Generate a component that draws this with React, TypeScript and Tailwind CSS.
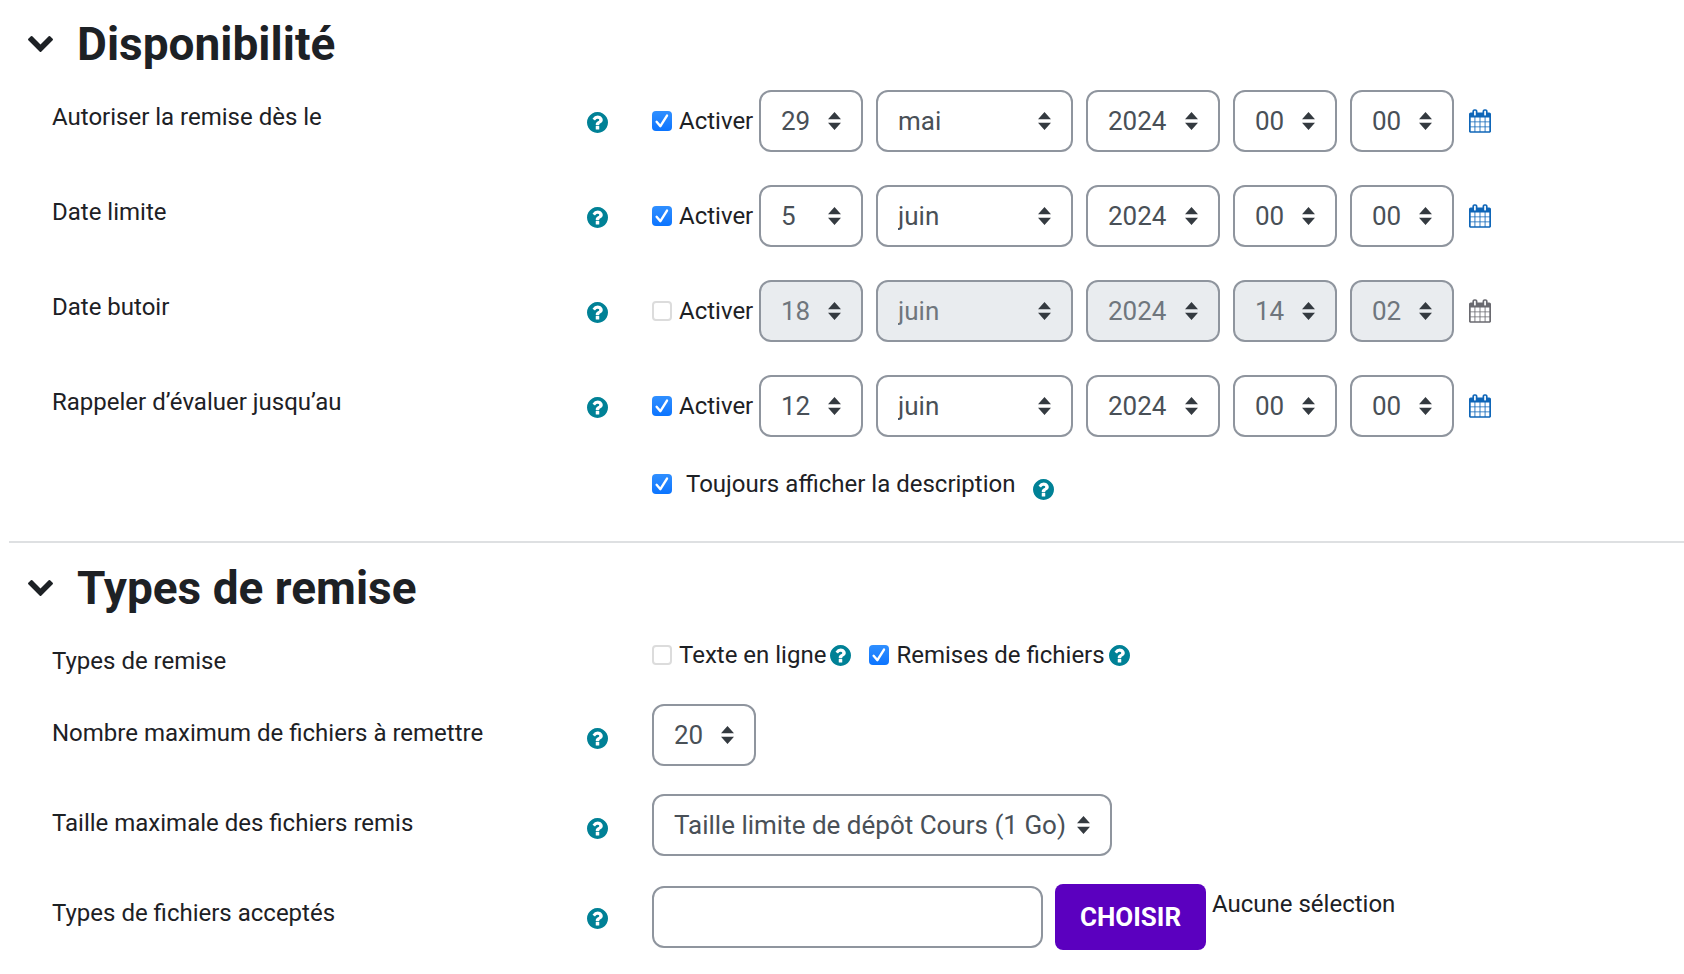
import React, { useState } from "react";
import clsx from "clsx";

const MONTHS = ["janvier", "février", "mars", "avril", "mai", "juin", "juillet", "août", "septembre", "octobre", "novembre", "décembre"];

const range = (from: number, to: number) => Array.from({ length: to - from + 1 }, (_, i) => String(from + i));
const padded = (to: number) => range(0, to).map((n) => n.padStart(2, "0"));

const DAYS = range(1, 31);
const YEARS = range(2020, 2030);
const HOURS = padded(23);
const MINUTES = padded(59);

function HelpIcon({ about }: { about: string }) {
    return (
        <button type="button" aria-label={`Aide sur ${about}`} className="block shrink-0 text-[#008196]">
            <svg viewBox="128 128 1536 1536" className="block h-[21px] w-[21px] fill-current">
                <path d="M1024 1376v-192q0-14-9-23t-23-9h-192q-14 0-23 9t-9 23v192q0 14 9 23t23 9h192q14 0 23-9t9-23zM1280 704q0-88-55.5-163t-138.5-116-170-41q-243 0-371 213-15 24 8 42l132 100q7 6 19 6 16 0 25-12 53-68 86-92 34-24 86-24 48 0 85.5 26t37.5 59q0 38-20 61t-68 45q-63 28-115.5 86.5t-52.5 125.5v36q0 14 9 23t23 9h192q14 0 23-9t9-23q0-19 21.5-49.5t54.5-49.5q32-18 49-28.5t46-35 44.5-48 28-60.5 12.5-81zM1664 896q0 209-103 385.5t-279.5 279.5-385.5 103-385.5-103-279.5-279.5-103-385.5 103-385.5 279.5-279.5 385.5-103 385.5 103 279.5 279.5 103 385.5z" />
            </svg>
        </button>
    );
}

function CalendarIcon() {
    return (
        <svg viewBox="64 0 1664 1792" className="block h-6 w-[22px] fill-current">
            <path d="M192 1664h288v-288h-288v288zM544 1664h320v-288h-320v288zM192 1312h288v-320h-288v320zM544 1312h320v-320h-320v320zM192 928h288v-288h-288v288zM928 1664h320v-288h-320v288zM544 928h320v-288h-320v288zM1312 1664h288v-288h-288v288zM928 1312h320v-320h-320v320zM576 448v-288q0-13-9.5-22.5t-22.5-9.5h-64q-13 0-22.5 9.5t-9.5 22.5v288q0 13 9.5 22.5t22.5 9.5h64q13 0 22.5-9.5t9.5-22.5zM1312 1312h288v-320h-288v320zM928 928h320v-288h-320v288zM1312 928h288v-288h-288v288zM1344 448v-288q0-13-9.5-22.5t-22.5-9.5h-64q-13 0-22.5 9.5t-9.5 22.5v288q0 13 9.5 22.5t22.5 9.5h64q13 0 22.5-9.5t9.5-22.5zM1728 384v1280q0 52-38 90t-90 38h-1408q-52 0-90-38t-38-90v-1280q0-52 38-90t90-38h128v-96q0-66 47-113t113-47h64q66 0 113 47t47 113v96h384v-96q0-66 47-113t113-47h64q66 0 113 47t47 113v96h128q52 0 90 38t38 90z" />
        </svg>
    );
}

interface CheckboxProps {
    id: string;
    label: string;
    checked: boolean;
    onChange: (checked: boolean) => void;
    wide?: boolean;
}

function Checkbox({ id, label, checked, onChange, wide = false }: CheckboxProps) {
    return (
        <div className={clsx("flex items-center", wide ? "gap-[14px]" : "gap-[7px]")}>
            <span className="relative block h-5 w-5">
                <input
                    id={id}
                    type="checkbox"
                    checked={checked}
                    onChange={(e) => onChange(e.target.checked)}
                    className="peer block h-5 w-5 appearance-none rounded-[4px] border-2 border-[#dcdcdc] bg-white checked:border-0 checked:bg-linear-to-b checked:from-[#2f8fff] checked:to-[#0a74ff]"
                />
                <svg viewBox="0 0 20 20" className="pointer-events-none absolute inset-0 hidden h-5 w-5 peer-checked:block">
                    <path d="M4.6 10.8l3.8 4.4L15 4.6" fill="none" stroke="#fff" strokeWidth="2.4" strokeLinecap="round" strokeLinejoin="round" />
                </svg>
            </span>
            <label htmlFor={id}>{label}</label>
        </div>
    );
}

interface SelectProps {
    id?: string;
    label?: string;
    value: string;
    options: string[];
    width: string;
    disabled?: boolean;
}

function Select({ id, label, value, options, width, disabled = false }: SelectProps) {
    return (
        <div className={clsx("relative", width)}>
            <select
                id={id}
                aria-label={label}
                defaultValue={value}
                disabled={disabled}
                className="block h-[62px] w-full appearance-none rounded-xl border-2 border-[#8f959e] bg-white pl-5 text-[26px] text-[#495057] disabled:bg-[#e9ecef] disabled:text-[#6f767d] disabled:opacity-100"
            >
                {options.map((o) => (
                    <option key={o}>{o}</option>
                ))}
            </select>
            <svg viewBox="0 0 4 5" preserveAspectRatio="none" className="pointer-events-none absolute top-[22px] right-[22px] h-[18px] w-[13px] fill-[#343a40]">
                <path d="M2 0L0 2h4zm0 5L0 3h4z" />
            </svg>
        </div>
    );
}

interface RowProps {
    label: string;
    htmlFor?: string;
    help?: boolean;
    lowered?: boolean;
    className?: string;
    children: React.ReactNode;
}

function Row({ label, htmlFor, help = true, lowered = false, className, children }: RowProps) {
    return (
        <div className={clsx("grid grid-cols-[556px_1fr] gap-x-11", className)}>
            <div className={clsx("flex items-start justify-between", lowered && "pt-[2px]")}>
                {label && (
                    <label htmlFor={htmlFor} className="pt-[9px]">
                        {label}
                    </label>
                )}
                {help && (
                    <div className="pt-[22px]">
                        <HelpIcon about={label} />
                    </div>
                )}
            </div>
            <div className="flex flex-wrap items-start">{children}</div>
        </div>
    );
}

interface DateField {
    id: string;
    label: string;
    enabled: boolean;
    day: string;
    month: string;
    year: string;
    hour: string;
    minute: string;
}

const DATE_FIELDS: DateField[] = [
    { id: "from", label: "Autoriser la remise dès le", enabled: true, day: "29", month: "mai", year: "2024", hour: "00", minute: "00" },
    { id: "due", label: "Date limite", enabled: true, day: "5", month: "juin", year: "2024", hour: "00", minute: "00" },
    { id: "cutoff", label: "Date butoir", enabled: false, day: "18", month: "juin", year: "2024", hour: "14", minute: "02" },
    { id: "grading", label: "Rappeler d’évaluer jusqu’au", enabled: true, day: "12", month: "juin", year: "2024", hour: "00", minute: "00" },
];

function DateRow({ field }: { field: DateField }) {
    const [enabled, setEnabled] = useState(field.enabled);

    return (
        <Row label={field.label} htmlFor={`${field.id}-day`}>
            <div className="flex items-center">
                <div className="w-[107px]">
                    <Checkbox id={`${field.id}-enabled`} label="Activer" checked={enabled} onChange={setEnabled} />
                </div>
                <div className="flex gap-[13px]">
                    <Select id={`${field.id}-day`} value={field.day} options={DAYS} width="w-[104px]" disabled={!enabled} />
                    <Select label="Mois" value={field.month} options={MONTHS} width="w-[197px]" disabled={!enabled} />
                    <Select label="Année" value={field.year} options={YEARS} width="w-[134px]" disabled={!enabled} />
                    <Select label="Heure" value={field.hour} options={HOURS} width="w-[104px]" disabled={!enabled} />
                    <Select label="Minute" value={field.minute} options={MINUTES} width="w-[104px]" disabled={!enabled} />
                </div>
                <a href="#calendrier" aria-label="Calendrier" className={clsx("ml-[15px]", enabled ? "text-[#0f66b8]" : "text-[#6a6a70]")}>
                    <CalendarIcon />
                </a>
            </div>
        </Row>
    );
}

interface SectionProps {
    title: string;
    children: React.ReactNode;
}

function Section({ title, children }: SectionProps) {
    const [open, setOpen] = useState(true);

    return (
        <section>
            <div className="flex items-center gap-6 pl-7">
                <button type="button" aria-label={title} aria-expanded={open} onClick={() => setOpen(!open)} className="text-[#1d2125]">
                    <svg viewBox="90 533 1612 1035" className={clsx("block h-4 w-[25px] fill-current", !open && "-rotate-90")}>
                        <path d="M1683 808l-742 741q-19 19-45 19t-45-19l-742-741q-19-19-19-45.5t19-45.5l166-165q19-19 45-19t45 19l531 531 531-531q19-19 45-19t45 19l166 165q19 19 19 45.5t-19 45.5z" />
                    </svg>
                </button>
                <h3 className="text-[46px] leading-[54px] font-bold">{title}</h3>
            </div>
            {open && <div className="pl-[52px]">{children}</div>}
        </section>
    );
}

export default function App() {
    const [showDescription, setShowDescription] = useState(true);
    const [onlineText, setOnlineText] = useState(false);
    const [fileSubmission, setFileSubmission] = useState(true);

    return (
        <form className="bg-white pt-[17px] pb-6 font-[Roboto,'Noto_Sans',sans-serif] text-2xl leading-9 text-[#1d2125]">
            <Section title="Disponibilité">
                <div className="mt-[19px] flex flex-col gap-[33px]">
                    {DATE_FIELDS.map((field) => (
                        <DateRow key={field.id} field={field} />
                    ))}
                </div>
                <Row label="" help={false} className="mt-[29px]">
                    <Checkbox id="show-description" label="Toujours afficher la description" checked={showDescription} onChange={setShowDescription} wide />
                    <div className="pt-[13px] pl-[18px]">
                        <HelpIcon about="Toujours afficher la description" />
                    </div>
                </Row>
            </Section>

            <hr className="mt-[39px] mb-[18px] ml-[9px] border-t-2 border-[#dee0e2]" />

            <Section title="Types de remise">
                <Row label="Types de remise" help={false} className="mt-[19px]">
                    <div className="flex flex-wrap items-center pt-[3px]">
                        <Checkbox id="online-text" label="Texte en ligne" checked={onlineText} onChange={setOnlineText} />
                        <div className="mr-[18px] ml-1">
                            <HelpIcon about="Texte en ligne" />
                        </div>
                        <Checkbox id="file-submission" label="Remises de fichiers" checked={fileSubmission} onChange={setFileSubmission} />
                        <div className="ml-1">
                            <HelpIcon about="Remises de fichiers" />
                        </div>
                    </div>
                </Row>
                <Row label="Nombre maximum de fichiers à remettre" htmlFor="max-files" lowered className="mt-[25px]">
                    <Select id="max-files" value="20" options={range(1, 20)} width="w-[104px]" />
                </Row>
                <Row label="Taille maximale des fichiers remis" htmlFor="max-size" lowered className="mt-7">
                    <Select
                        id="max-size"
                        value="Taille limite de dépôt Cours (1 Go)"
                        options={["Taille limite de dépôt Cours (1 Go)", "500 Mo", "100 Mo", "50 Mo", "10 Mo"]}
                        width="w-[460px]"
                    />
                </Row>
                <Row label="Types de fichiers acceptés" htmlFor="file-types" lowered className="mt-7">
                    <input id="file-types" type="text" className="mt-[2px] block h-[62px] w-[391px] rounded-xl border-2 border-[#8f959e] bg-white px-5 text-[26px] text-[#495057]" />
                    <button type="button" className="ml-3 h-[66px] w-[151px] rounded-lg bg-[#5b00bf] text-[26px] font-bold text-white">
                        CHOISIR
                    </button>
                    <span className="pt-[2px] pl-[6px]">Aucune sélection</span>
                </Row>
            </Section>
        </form>
    );
}
